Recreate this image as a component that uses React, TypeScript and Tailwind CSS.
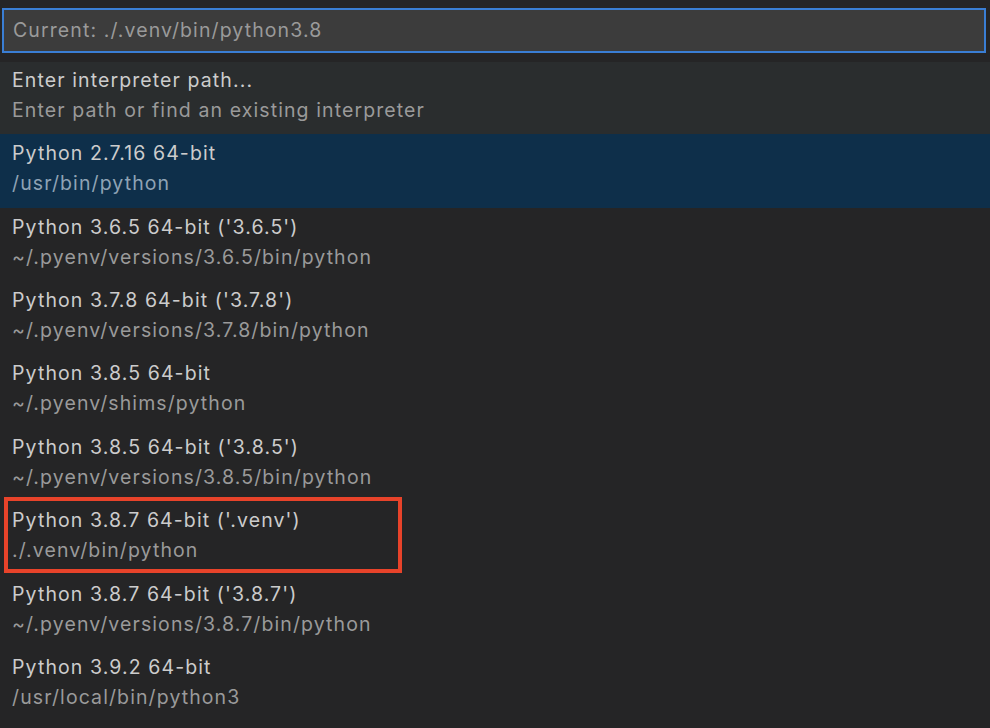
const items = [
  { label: "Python 2.7.16 64-bit", path: "/usr/bin/python", selected: true },
  { label: "Python 3.6.5 64-bit ('3.6.5')", path: "~/.pyenv/versions/3.6.5/bin/python" },
  { label: "Python 3.7.8 64-bit ('3.7.8')", path: "~/.pyenv/versions/3.7.8/bin/python" },
  { label: "Python 3.8.5 64-bit", path: "~/.pyenv/shims/python" },
  { label: "Python 3.8.5 64-bit ('3.8.5')", path: "~/.pyenv/versions/3.8.5/bin/python" },
  { label: "Python 3.8.7 64-bit ('.venv')", path: "./.venv/bin/python", marked: true },
  { label: "Python 3.8.7 64-bit ('3.8.7')", path: "~/.pyenv/versions/3.8.7/bin/python" },
  { label: "Python 3.9.2 64-bit", path: "/usr/local/bin/python3" },
];

export default function App() {
  return (
    <div className="h-[728px] w-[990px] overflow-hidden bg-[#252526] font-['Inter',sans-serif] text-[19.5px] tracking-[1.1px]">
      <div className="pt-[8px] pl-[2px] pr-[4px] pb-[9px]">
        <div className="flex h-[45px] items-center border-2 border-[#3a7ed4] bg-[#3c3c3c] px-[9px] text-[#9a9a9a]">
          Current: ./.venv/bin/python3.8
        </div>
      </div>

      <div className="flex h-[72px] flex-col justify-center bg-[#2a2d2e] px-[12px] pb-[6px]">
        <div className="leading-[30px] text-[#cccccc]">Enter interpreter path...</div>
        <div className="leading-[30px] text-[#9a9a9a]">Enter path or find an existing interpreter</div>
      </div>

      {items.map((item) => (
        <div
          key={item.label}
          className={
            item.selected
              ? "flex h-[74px] flex-col justify-center bg-[#0e2f4a] px-[12px] pb-[6px]"
              : "flex h-[73.4px] flex-col justify-center px-[12px] pb-[6px]"
          }
        >
          {item.marked ? (
            <div className="-ml-[8px] flex h-[76px] w-[398px] shrink-0 flex-col justify-center border-4 border-[#e8432a] px-[4px]">
              <div className="leading-[30px] text-[#cccccc]">{item.label}</div>
              <div className="leading-[30px] text-[#9a9a9a]">{item.path}</div>
            </div>
          ) : (
            <>
              <div className="leading-[30px] text-[#cccccc]">{item.label}</div>
              <div className={item.selected ? "leading-[30px] text-[#8fa3b5]" : "leading-[30px] text-[#9a9a9a]"}>
                {item.path}
              </div>
            </>
          )}
        </div>
      ))}
    </div>
  );
}
